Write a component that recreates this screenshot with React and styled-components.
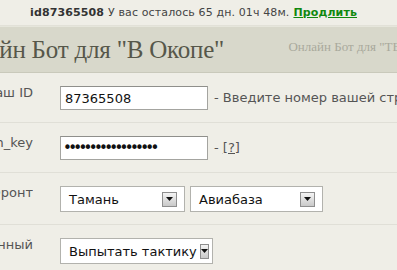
import styled, { createGlobalStyle } from "styled-components";

const GlobalStyle = createGlobalStyle`
  html, body {
    margin: 0;
    padding: 0;
    background: #efeee7;
  }
  body {
    font-family: "DejaVu Sans", Verdana, sans-serif;
  }
`;

const Page = styled.div`
  width: 397px;
  height: 270px;
  overflow: hidden;
  background: #efeee7;
`;

const TopBar = styled.div`
  height: 25px;
  display: flex;
  align-items: center;
  justify-content: flex-start;
  padding-left: 30px;
  font-size: 11px;
  letter-spacing: 0.12px;
  color: #444;
  white-space: nowrap;
  border-bottom: 1px solid #e2e1d8;
`;

const UserId = styled.b`
  color: #333;
  margin-right: 4px;
`;

const Renew = styled.a`
  color: #11880f;
  font-weight: bold;
  text-decoration: underline;
  margin-left: 4px;
`;

const Header = styled.div`
  height: 45px;
  display: flex;
  align-items: center;
  justify-content: space-between;
  background: #d8d8cb;
  border-top: 1px solid #e6e6dc;
  border-bottom: 1px solid #c9c9bb;
  white-space: nowrap;
  overflow: hidden;
`;

const Title = styled.h1`
  margin: 0 0 0 -55px;
  font-family: "Liberation Serif", "Times New Roman", serif;
  font-weight: normal;
  font-size: 25px;
  letter-spacing: -0.2px;
  color: #56574a;
`;

const SubTitle = styled.span`
  margin: -6px -47px 0 0;
  font-family: "Liberation Serif", "Times New Roman", serif;
  font-size: 13px;
  color: #a9a99c;
`;

const Row = styled.div`
  display: flex;
  align-items: flex-start;
  padding: 13px 0 12px;
  border-bottom: 1px solid #e0dfd7;
  white-space: nowrap;
`;

const Label = styled.div`
  width: 33px;
  flex: none;
  display: flex;
  justify-content: flex-end;
  overflow: hidden;
  margin-right: 27px;
  margin-top: -1px;
  font-size: 13px;
  color: #555;
`;

const TextInput = styled.input`
  box-sizing: border-box;
  width: 148px;
  height: 24px;
  margin: 0;
  padding: 0 4px;
  border: 1px solid #a4a4a0;
  border-top-color: #8f8f8b;
  background: #fff;
  font-family: "DejaVu Sans", Verdana, sans-serif;
  font-size: 13px;
  color: #111;
  outline: none;

  &[type="password"] {
    font-size: 15px;
    letter-spacing: -3.7px;
    padding-left: 2px;
  }
`;

const Hint = styled.span`
  margin-left: 6px;
  line-height: 24px;
  font-size: 13px;
  color: #555;
`;

const HelpLink = styled.a`
  color: #555;
  text-decoration: underline;
`;

const Select = styled.div`
  box-sizing: border-box;
  width: ${(p) => p.$width}px;
  height: 26px;
  margin-right: 5px;
  display: flex;
  align-items: center;
  justify-content: space-between;
  padding: 0 ${(p) => p.$padRight ?? 7}px 0 8px;
  border: 1px solid #b2b2ad;
  background: #fff;
  font-size: 13px;
  color: #111;
`;

const ArrowBox = styled.span`
  box-sizing: border-box;
  width: 15px;
  height: 15px;
  display: flex;
  align-items: center;
  justify-content: center;
  border: 1px solid #8e8e8e;
  background: linear-gradient(#f4f4f4, #c9c9c9);
  margin-left: 3px;
`;

function Arrow() {
  return (
    <ArrowBox>
      <svg width="7" height="4" viewBox="0 0 7 4">
        <path d="M0 0h7L3.5 4z" fill="#111" />
      </svg>
    </ArrowBox>
  );
}

function Dropdown({ width, padRight, children }) {
  return (
    <Select $width={width} $padRight={padRight}>
      <span>{children}</span>
      <Arrow />
    </Select>
  );
}

export default function App() {
  return (
    <Page>
      <GlobalStyle />
      <TopBar>
        <UserId>id87365508</UserId>У вас осталось 65 дн. 01ч 48м.
        <Renew href="#">Продлить</Renew>
      </TopBar>
      <Header>
        <Title>Онлайн Бот для "В Окопе"</Title>
        <SubTitle>Онлайн Бот для "ТВ Окопе"</SubTitle>
      </Header>
      <Row>
        <Label>Ваш ID</Label>
        <TextInput type="text" defaultValue="87365508" readOnly />
        <Hint>- Введите номер вашей страницы</Hint>
      </Row>
      <Row>
        <Label>Auth_key</Label>
        <TextInput type="password" defaultValue="abcdefghijklmnopqr" readOnly />
        <Hint>
          - <HelpLink href="#">[?]</HelpLink>
        </Hint>
      </Row>
      <Row>
        <Label>Фронт</Label>
        <Dropdown width={125}>Тамань</Dropdown>
        <Dropdown width={133}>Авиабаза</Dropdown>
      </Row>
      <Row>
        <Label>Военный</Label>
        <Dropdown width={153} padRight={5}>
          Выпытать тактику
        </Dropdown>
      </Row>
    </Page>
  );
}
